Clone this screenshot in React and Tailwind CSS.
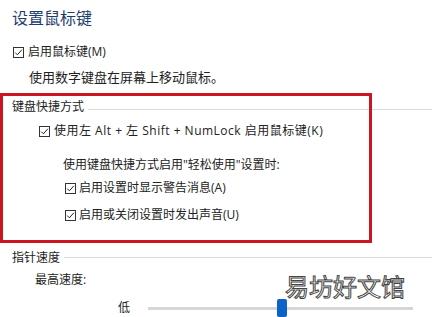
import React from "react";

function Box() {
  return (
    <span className="w-[11px] h-[11px] border border-[#333] bg-white flex items-center justify-center shrink-0">
      <svg width="9" height="9" viewBox="0 0 9 9" fill="none">
        <path d="M1.2 4.6 L3.4 6.8 L7.8 1.8" stroke="#222" strokeWidth="1" />
      </svg>
    </span>
  );
}

export default function App() {
  return (
    <div className="w-[432px] h-[317px] relative overflow-hidden bg-white text-[#222] font-['Open_Sans','Noto_Sans_CJK_SC',sans-serif]">
      <div className="flex flex-col">
        <div className="pl-[12px] pt-[8px] text-[16px] leading-[20px] text-[#1f3d6e]">设置鼠标键</div>
        <div className="pl-[13px] mt-[16px] h-[16px] flex items-center gap-[4px] text-[12px] leading-[16px]">
          <Box />
          <span>启用鼠标键(M)</span>
        </div>
        <div className="pl-[29px] mt-[9px] h-[16px] text-[13px] leading-[16px]">使用数字键盘在屏幕上移动鼠标。</div>
        <div className="pl-[12px] mt-[14px] h-[16px] flex text-[12px] leading-[16px]">
          <span>键盘快捷方式</span>
          <div className="flex-1 h-px bg-[#dadada] ml-[4px] mt-[10px]" />
        </div>
        <div className="pl-[39px] mt-[8px] h-[16px] flex items-center gap-[4px] text-[12px] leading-[16px]">
          <Box />
          <span className="tracking-[0.5px]">使用左 Alt + 左 Shift + NumLock 启用鼠标键(K)</span>
        </div>
        <div className="pl-[63px] mt-[18px] h-[16px] text-[12px] leading-[16px]">使用键盘快捷方式启用"轻松使用"设置时:</div>
        <div className="pl-[65px] mt-[7px] h-[16px] flex items-center gap-[3px] text-[12px] leading-[16px]">
          <Box />
          <span>启用设置时显示警告消息(A)</span>
        </div>
        <div className="pl-[65px] mt-[11px] h-[16px] flex items-center gap-[3px] text-[12px] leading-[16px]">
          <Box />
          <span>启用或关闭设置时发出声音(U)</span>
        </div>
        <div className="pl-[12px] mt-[27px] h-[16px] flex text-[12px] leading-[16px]">
          <span>指针速度</span>
          <div className="flex-1 h-px bg-[#dadada] ml-[4px] mt-[7px]" />
        </div>
        <div className="pl-[35px] mt-[6px] h-[16px] text-[12px] leading-[16px]">最高速度:</div>
        <div className="pl-[118px] mt-[12px] h-[16px] flex items-center text-[12px] leading-[16px]">
          <span>低</span>
          <div className="ml-[18px] w-[265px] h-[3px] bg-[#d6d6d6] relative">
            <div className="absolute left-[129px] top-[-8px] w-[10px] h-[18px] rounded-[2px] bg-[#0b63c9]" />
          </div>
        </div>
      </div>
      <div className="absolute left-0 top-[93px] w-[372px] h-[150px] border-[3px] border-[#cc161f]" />
      <div className="absolute left-[285px] top-[272px] text-[24px] leading-[28px] text-white [-webkit-text-stroke:1px_#444] font-['Noto_Sans_CJK_SC',sans-serif]">易坊好文馆</div>
    </div>
  );
}
